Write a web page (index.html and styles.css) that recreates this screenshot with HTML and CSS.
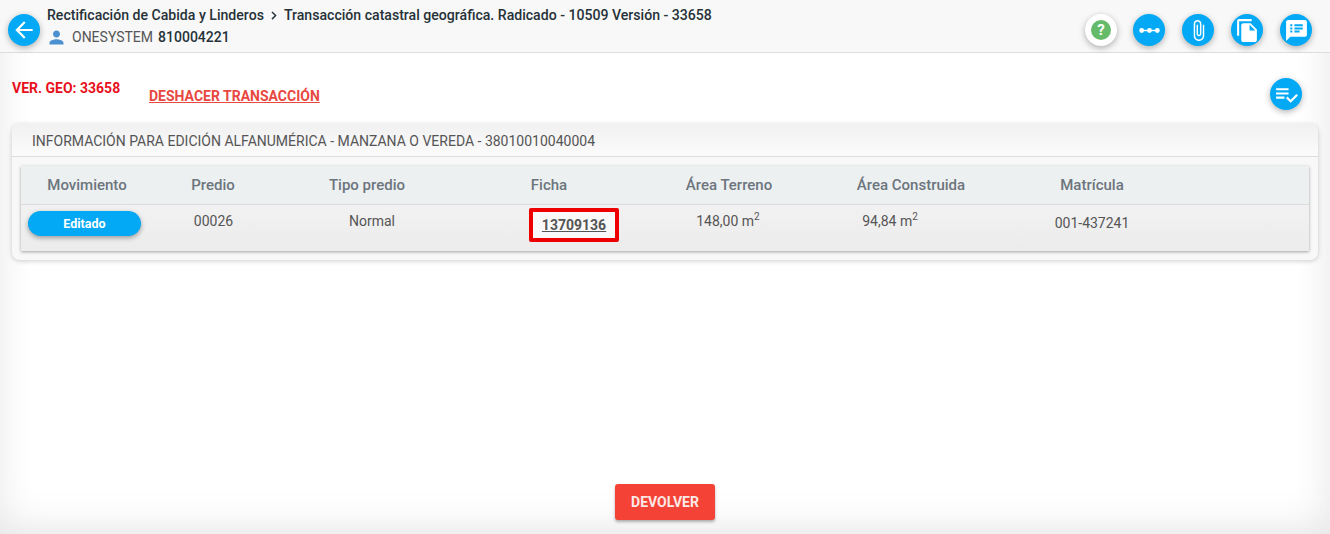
FILE: index.html
```html
<!DOCTYPE html>
<html>
<head>
    <meta charset="utf-8">
    <link rel="stylesheet" href="styles.css">
</head>
<body>
    <div class="page">
        <div class="header">
            <button class="round-btn back-btn">
                <svg viewBox="0 0 24 24" width="24" height="24"><path d="M20 11H7.83l5.59-5.59L12 4l-8 8 8 8 1.41-1.41L7.83 13H20v-2z"/></svg>
            </button>
            <div class="header-content">
                <div class="breadcrumb">
                    <span>Rectificación de Cabida y Linderos</span>
                    <svg class="chevron" viewBox="0 0 24 24" width="16" height="16"><path d="M7.6 5.2 9.8 3l9 9-9 9-2.2-2.2L14.4 12z"/></svg>
                    <span>Transacción catastral geográfica. Radicado - 10509 Versión - 33658</span>
                </div>
                <div class="user-line">
                    <svg class="user-icon" viewBox="0 0 24 24" width="20" height="20"><path d="M12 12c2.21 0 4-1.79 4-4s-1.79-4-4-4-4 1.79-4 4 1.79 4 4 4zm0 2c-2.67 0-8 1.34-8 4v2h16v-2c0-2.66-5.33-4-8-4z"/></svg>
                    <span class="user-name">ONESYSTEM</span>
                    <span class="user-id">810004221</span>
                </div>
            </div>
            <div class="header-actions">
                <button class="round-btn help-btn"><span class="help-mark">?</span></button>
                <button class="round-btn">
                    <svg viewBox="0 0 24 24" width="24" height="24"><circle cx="4.5" cy="12" r="2.3"/><circle cx="12" cy="12" r="2.3"/><circle cx="19.5" cy="12" r="2.3"/><path d="M4.5 11.3h15v1.4h-15z"/></svg>
                </button>
                <button class="round-btn">
                    <svg class="clip-icon" viewBox="0 0 24 24" width="24" height="24"><path d="M16.5 6v11.5c0 2.21-1.79 4-4 4s-4-1.79-4-4V5c0-1.38 1.12-2.5 2.5-2.5s2.5 1.12 2.5 2.5v10.5c0 .55-.45 1-1 1s-1-.45-1-1V6H10v9.5c0 1.38 1.12 2.5 2.5 2.5s2.5-1.12 2.5-2.5V5c0-2.21-1.79-4-4-4S7 2.79 7 5v12.5c0 3.04 2.46 5.5 5.5 5.5s5.5-2.46 5.5-5.5V6h-1.5z"/></svg>
                </button>
                <button class="round-btn">
                    <svg viewBox="0 0 24 24" width="24" height="24"><path d="M16 1H4c-1.1 0-2 .9-2 2v14h2V3h12V1zm-1 4l6 6v10c0 1.1-.9 2-2 2H7.99C6.89 23 6 22.1 6 21l.01-14c0-1.1.89-2 1.99-2h7zm-1 7h5.5L14 6.5V12z"/></svg>
                </button>
                <button class="round-btn">
                    <svg viewBox="0 0 24 24" width="24" height="24"><path d="M20 2H4c-1.1 0-1.99.9-1.99 2L2 22l4-4h14c1.1 0 2-.9 2-2V4c0-1.1-.9-2-2-2zM8 14H6v-2h2v2zm0-3H6V9h2v2zm0-3H6V6h2v2zm7 6h-5v-2h5v2zm3-3h-8V9h8v2zm0-3h-8V6h8v2z"/></svg>
                </button>
            </div>
        </div>

        <div class="status-row">
            <div class="version">VER. GEO: 33658</div>
            <a class="undo-link" href="#">DESHACER TRANSACCIÓN</a>
            <button class="round-btn check-btn">
                <svg viewBox="0 0 24 24" width="24" height="24"><path d="M14 10H2v2h12v-2zm0-4H2v2h12V6zM2 16h8v-2H2v2zm19.5-4.5L23 13l-6.99 7-4.51-4.5L13 14l3.01 3 5.49-5.5z"/></svg>
            </button>
        </div>

        <div class="card">
            <div class="card-title">INFORMACIÓN PARA EDICIÓN ALFANUMÉRICA - MANZANA O VEREDA - 38010010040004</div>
            <div class="card-body">
                <div class="grid-table">
                    <div class="grid-row head-row">
                        <div>Movimiento</div>
                        <div>Predio</div>
                        <div>Tipo predio</div>
                        <div>Ficha</div>
                        <div>Área Terreno</div>
                        <div>Área Construida</div>
                        <div>Matrícula</div>
                    </div>
                    <div class="grid-row data-row">
                        <div><span class="pill">Editado</span></div>
                        <div class="cell-raise cell-code">00026</div>
                        <div class="cell-raise cell-normal">Normal</div>
                        <div class="cell-ficha"><a class="ficha-link" href="#">13709136</a></div>
                        <div class="cell-raise cell-land">148,00 m<sup>2</sup></div>
                        <div class="cell-raise cell-built">94,84 m<sup>2</sup></div>
                        <div>001-437241</div>
                    </div>
                </div>
            </div>
        </div>

        <div class="footer">
            <button class="return-btn">DEVOLVER</button>
        </div>
    </div>
</body>
</html>
```

FILE: styles.css
```css
html, body {
    margin: 0;
    height: 100%;
}

body {
    font-family: Roboto, "Liberation Sans", sans-serif;
    color: #333;
    overflow: hidden;
}

.page {
    height: 534px;
    display: flex;
    flex-direction: column;
    background: #fff;
    box-shadow: inset 0 -14px 36px rgba(0, 0, 0, .055), inset 14px 0 30px rgba(0, 0, 0, .025), inset -14px 0 30px rgba(0, 0, 0, .03);
}

button {
    font-family: inherit;
    border: 0;
    padding: 0;
    cursor: pointer;
}

.round-btn {
    width: 32px;
    height: 32px;
    border-radius: 50%;
    background: #03a9f4;
    box-shadow: 0 2px 6px rgba(0, 0, 0, .3);
    display: flex;
    align-items: center;
    justify-content: center;
    flex: none;
}

.round-btn svg {
    fill: #fff;
    width: 25px;
    height: 25px;
}

.round-btn svg.clip-icon {
    width: 23px;
    height: 23px;
}

/* header */
.header {
    height: 52px;
    border-bottom: 1px solid #ddd;
    background: #f8f8f8;
    display: flex;
    align-items: flex-start;
    padding-left: 8px;
    padding-right: 18px;
}

.round-btn.back-btn svg {
    width: 26px;
    height: 26px;
}

.back-btn {
    margin-top: 14px;
}

.header-content {
    flex-grow: 1;
    padding-left: 7px;
    padding-top: 5px;
}

.breadcrumb {
    display: flex;
    align-items: center;
    font-size: 14.1px;
    font-weight: 500;
    color: #263238;
    height: 20px;
}

.chevron {
    fill: #263238;
    width: 11px;
    height: 11px;
    margin: 0 5px 0 4px;
}

.user-line {
    display: flex;
    align-items: center;
    font-size: 14px;
    height: 20px;
    margin-top: 2px;
}

.user-icon {
    fill: #4a8fd0;
    width: 21px;
    height: 21px;
    margin-left: -1px;
    margin-right: 5px;
}

.user-name {
    color: #555;
    margin-right: 5px;
}

.user-id {
    font-weight: 500;
    color: #263238;
}

.header-actions {
    display: flex;
    gap: 17px;
    margin-top: 14px;
}

.help-btn {
    background: #fff;
    margin-right: -1px;
}

.help-mark {
    width: 20px;
    height: 20px;
    border-radius: 50%;
    background: #66bb6a;
    color: #fff;
    font-size: 15px;
    font-weight: 700;
    line-height: 20px;
    text-align: center;
}

/* version row */
.status-row {
    height: 71px;
    display: flex;
    align-items: flex-start;
    padding-left: 12px;
    padding-right: 28px;
}

.version {
    color: #e8101c;
    font-size: 14px;
    font-weight: 700;
    margin-top: 27px;
    width: 137px;
}

.undo-link {
    color: #e8483f;
    font-size: 14px;
    font-weight: 700;
    margin-top: 35px;
}

.check-btn {
    margin-left: auto;
    margin-top: 25px;
}

/* card */
.card {
    margin: 0 12px;
    height: 136px;
    border-radius: 8px;
    background: #f8f8f8;
    box-shadow: 0 1px 5px rgba(0, 0, 0, .2);
}

.card-title {
    height: 33px;
    box-sizing: border-box;
    border-bottom: 1px solid #ddd;
    border-radius: 8px 8px 0 0;
    background: linear-gradient(#f1f1f1, #fbfbfb);
    padding: 9px 0 0 20px;
    font-size: 14px;
    color: #555;
}

.card-body {
    padding: 9px 9px 0;
}

.grid-table {
    height: 85px;
    box-shadow: 0 1px 3px rgba(0, 0, 0, .35);
    background: linear-gradient(#f6f6f6, #ececec);
}

.grid-row {
    display: grid;
    grid-template-columns: 132px 120px 188px 176px 184px 180px 182px 1fr;
    text-align: center;
}

.head-row {
    height: 39px;
    box-sizing: border-box;
    border-bottom: 1px solid #dcdcdc;
    background: #ecf0f1;
    color: #6c757d;
    font-size: 15px;
    font-weight: 500;
    line-height: 38px;
}

.data-row {
    height: 46px;
    font-size: 14px;
    line-height: 36px;
    color: #555;
}

.cell-raise {
    margin-top: -2px;
}

.cell-code {
    padding-left: 1px;
}

.cell-normal {
    padding-left: 10px;
}

.cell-land {
    padding-right: 2px;
}

.cell-built {
    padding-right: 42px;
}

.cell-ficha {
    padding-left: 50px;
}

sup {
    font-size: 10px;
    line-height: 0;
}

.pill {
    display: block;
    margin: 6px 0 0 7px;
    width: 113px;
    height: 25px;
    border-radius: 13px;
    background: #03a9f4;
    box-shadow: 0 2px 5px rgba(0, 0, 0, .35);
    color: #fff;
    font-size: 12.5px;
    font-weight: 700;
    line-height: 26px;
}

.ficha-link {
    display: inline-block;
    margin-top: 3px;
    padding: 0 9px;
    height: 26px;
    line-height: 26px;
    border: 4px solid #ee0000;
    border-radius: 2px;
    background: #f9f9f9;
    color: #555;
    font-weight: 700;
}

/* footer */
.footer {
    margin-top: auto;
    height: 50px;
    display: flex;
    justify-content: center;
}

.return-btn {
    width: 100px;
    height: 36px;
    border-radius: 3px;
    background: #f44336;
    box-shadow: 0 2px 3px rgba(0, 0, 0, .3);
    color: #fbe9e7;
    font-size: 14px;
    font-weight: 700;
}
```
